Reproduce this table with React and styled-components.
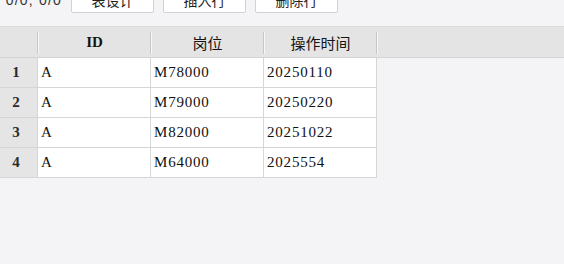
import React from 'react';
import styled, { createGlobalStyle } from 'styled-components';

const GlobalStyle = createGlobalStyle`
  html, body {
    margin: 0;
    padding: 0;
    background: #f4f4f6;
    overflow: hidden;
  }
  body {
    font-family: "Liberation Serif", "Noto Sans CJK SC", serif;
    color: #1a1a1a;
  }
`;

const Page = styled.div`
  width: 564px;
  height: 264px;
  overflow: hidden;
  background: #f4f4f6;
`;

/* scrolled up a little: the toolbar is only partly in view */
const Scroller = styled.div`
  margin-top: -19px;
`;

const Toolbar = styled.div`
  display: flex;
  align-items: center;
  gap: 9px;
  padding: 6px 0 13px;
  border-bottom: 1px solid #dcdcde;
`;

const Counter = styled.span`
  width: 62px;
  text-align: right;
  font-family: "Liberation Sans", sans-serif;
  font-size: 14px;
  letter-spacing: 1.2px;
  color: #333;
  white-space: nowrap;
`;

const ToolButton = styled.button`
  width: 83px;
  height: 26px;
  padding: 0;
  background: #fff;
  border: 1px solid #d2d2d4;
  border-radius: 2px;
  font-family: "Noto Sans CJK SC", sans-serif;
  font-size: 14px;
  color: #222;
`;

const HeaderRow = styled.div`
  display: flex;
  height: 30px;
  background: #e4e4e4;
  border-bottom: 1px solid #d4d4d4;
`;

const HeadCell = styled.div`
  position: relative;
  width: ${p => p.$w}px;
  display: flex;
  align-items: center;
  justify-content: center;
  font-family: ${p => (p.$latin ? '"Liberation Serif", serif' : '"Noto Sans CJK SC", sans-serif')};
  font-weight: ${p => (p.$latin ? 700 : 400)};
  font-size: 15px;
  color: #141414;

  &::after {
    content: '';
    position: absolute;
    right: 0;
    top: 5px;
    bottom: 3px;
    width: 1px;
    background: #c9c7c2;
    box-shadow: 1px 0 0 #f7f7f7;
  }
`;

const Body = styled.div`
  width: 377px;
`;

const Row = styled.div`
  display: grid;
  grid-template-columns: 38px 113px 113px 113px;
  height: 29px;
  border-bottom: 1px solid #d6d6d6;
`;

const RowNum = styled.div`
  display: flex;
  align-items: center;
  justify-content: center;
  padding-right: 5px;
  background: #e5e5e5;
  border-right: 1px solid #d6d6d6;
  font-size: 15px;
  font-weight: 700;
  color: #2a2a2a;
`;

const Cell = styled.div`
  display: flex;
  align-items: center;
  padding-left: 3px;
  background: #fff;
  border-right: 1px solid #d6d6d6;
  font-size: 15px;
  letter-spacing: 0.8px;
  color: #111;
`;

const rows = [
  { id: 'A', post: 'M78000', time: '20250110' },
  { id: 'A', post: 'M79000', time: '20250220' },
  { id: 'A', post: 'M82000', time: '20251022' },
  { id: 'A', post: 'M64000', time: '2025554' },
];

export default function App() {
  return (
    <Page>
      <GlobalStyle />
      <Scroller>
        <Toolbar>
          <Counter>0/0, 0/0</Counter>
          <ToolButton>表设计</ToolButton>
          <ToolButton>插入行</ToolButton>
          <ToolButton>删除行</ToolButton>
        </Toolbar>

        <HeaderRow>
          <HeadCell $w={38} />
          <HeadCell $w={113} $latin>ID</HeadCell>
          <HeadCell $w={113}>岗位</HeadCell>
          <HeadCell $w={113}>操作时间</HeadCell>
        </HeaderRow>

        <Body>
          {rows.map((r, i) => (
            <Row key={i}>
              <RowNum>{i + 1}</RowNum>
              <Cell>{r.id}</Cell>
              <Cell>{r.post}</Cell>
              <Cell>{r.time}</Cell>
            </Row>
          ))}
        </Body>
      </Scroller>
    </Page>
  );
}
